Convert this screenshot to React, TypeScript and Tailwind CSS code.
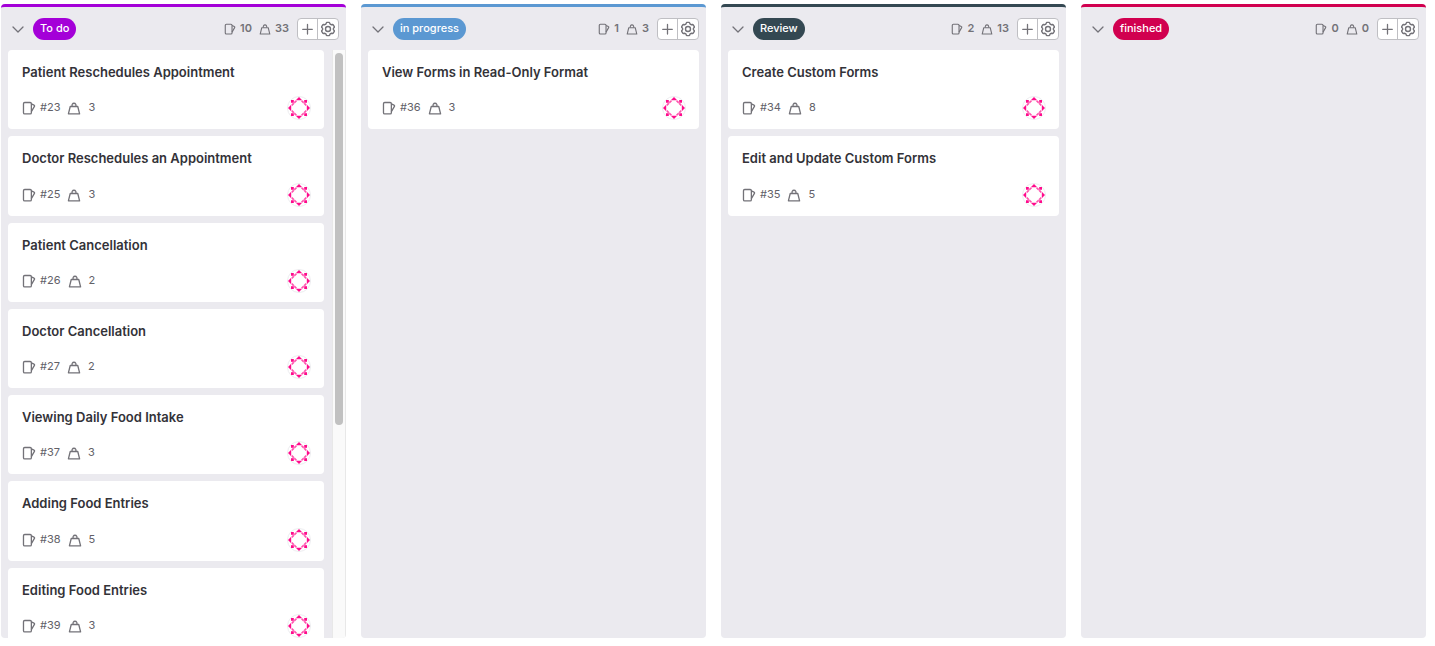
import React from "react";

type Card = { id: number; title: string; weight: number };
type Column = {
  name: string;
  line: string;
  pill: string;
  count: number;
  weight: number;
  cards: Card[];
  scroll?: boolean;
};

const columns: Column[] = [
  {
    name: "To do",
    line: "border-[#a400d8]",
    pill: "bg-[#a400d8]",
    count: 10,
    weight: 33,
    scroll: true,
    cards: [
      { id: 23, title: "Patient Reschedules Appointment", weight: 3 },
      { id: 25, title: "Doctor Reschedules an Appointment", weight: 3 },
      { id: 26, title: "Patient Cancellation", weight: 2 },
      { id: 27, title: "Doctor Cancellation", weight: 2 },
      { id: 37, title: "Viewing Daily Food Intake", weight: 3 },
      { id: 38, title: "Adding Food Entries", weight: 5 },
      { id: 39, title: "Editing Food Entries", weight: 3 },
    ],
  },
  {
    name: "in progress",
    line: "border-[#5b98d2]",
    pill: "bg-[#5b98d2]",
    count: 1,
    weight: 3,
    cards: [{ id: 36, title: "View Forms in Read-Only Format", weight: 3 }],
  },
  {
    name: "Review",
    line: "border-[#344852]",
    pill: "bg-[#344852]",
    count: 2,
    weight: 13,
    cards: [
      { id: 34, title: "Create Custom Forms", weight: 8 },
      { id: 35, title: "Edit and Update Custom Forms", weight: 5 },
    ],
  },
  {
    name: "finished",
    line: "border-[#d1004f]",
    pill: "bg-[#d1004f]",
    count: 0,
    weight: 0,
    cards: [],
  },
];

function IssueIcon({ className }: { className: string }) {
  return (
    <svg viewBox="0 0 16 16" className={className} fill="none" stroke="currentColor" strokeWidth="1.5" aria-hidden="true">
      <rect x="1.7" y="1.7" width="9" height="13" rx="1.4" />
      <path d="M10.7 3.2l3 1.5a1 1 0 0 1 .5 1.5l-3.5 6" strokeLinejoin="round" />
    </svg>
  );
}

function WeightIcon({ className }: { className: string }) {
  return (
    <svg viewBox="0 0 16 16" className={className} fill="none" stroke="currentColor" strokeWidth="1.5" aria-hidden="true">
      <path d="M3.7 6.3h8.6l2.1 8.4H1.6z" strokeLinejoin="round" />
      <path d="M6 6a2.3 2.3 0 1 1 4 0" />
    </svg>
  );
}

function ChevronIcon() {
  return (
    <svg viewBox="0 0 16 16" className="size-4" fill="none" stroke="currentColor" strokeWidth="1.3" strokeLinecap="round" strokeLinejoin="round" aria-hidden="true">
      <path d="M3 6l5 5 5-5" />
    </svg>
  );
}

function PlusIcon() {
  return (
    <svg viewBox="0 0 14 14" className="size-3.5" fill="none" stroke="currentColor" strokeWidth="1.3" strokeLinecap="round" aria-hidden="true">
      <path d="M6.5 2.5v9.5M1.7 7.3h9.6" />
    </svg>
  );
}

function GearIcon() {
  return (
    <svg viewBox="0 0 16 16" className="size-4" fill="none" stroke="currentColor" strokeWidth="1.4" strokeLinejoin="round" aria-hidden="true">
      <path d="M6.9 1.4h2.2a.6.6 0 0 1 .5.4l.5 1.3 1.1.6 1.4-.2a.6.6 0 0 1 .6.3l1.1 1.9a.6.6 0 0 1 0 .6L13.4 7.4v1.2l.9 1.1a.6.6 0 0 1 0 .6l-1.1 1.9a.6.6 0 0 1-.6.3l-1.4-.2-1.1.6-.5 1.3a.6.6 0 0 1-.5.4H6.9a.6.6 0 0 1-.5-.4l-.5-1.3-1.1-.6-1.4.2a.6.6 0 0 1-.6-.3l-1.1-1.9a.6.6 0 0 1 0-.6l.9-1.1V7.4l-.9-1.1a.6.6 0 0 1 0-.6l1.1-1.9a.6.6 0 0 1 .6-.3l1.4.2 1.1-.6.5-1.3a.6.6 0 0 1 .5-.4z" />
      <circle cx="8" cy="8" r="2.5" />
    </svg>
  );
}

function Avatar() {
  return (
    <svg viewBox="0 0 24 24" className="size-6" role="img" aria-label="Assignee">
      <circle cx="12" cy="12" r="11.5" fill="#fff" stroke="#ececef" />
      {[0, 90, 180, 270].map((angle) => (
        <g key={angle} transform={`rotate(${angle} 12 12)`} fill="#ff0a8c">
          <path d="M12 1l3.2 3.2H8.8z" />
          <path d="M4 4h2.8v2.8H4z" />
          <path d="M6.8 6l2-1.7 1.2 1-2.2 2.2zM6 6.8L4.3 8.8l1 1.2 2.2-2.2z" opacity=".7" />
        </g>
      ))}
    </svg>
  );
}

function BoardCard({ card }: { card: Card }) {
  return (
    <li className="shrink-0 rounded bg-white pt-3.5 pr-[13px] pb-[9px] pl-3.5">
      <h3 className="text-[13px] leading-tight font-semibold text-[#333238]">{card.title}</h3>
      <div className="mt-4 flex items-center justify-between">
        <div className="flex items-center text-[11px] leading-4 text-[#626168]">
          <IssueIcon className="size-3.5 text-[#737278]" />
          <span className="ml-1 pb-0.5">#{card.id}</span>
          <WeightIcon className="ml-[7px] size-3.5 text-[#737278]" />
          <span className="ml-[7px] pb-0.5">{card.weight}</span>
        </div>
        <Avatar />
      </div>
    </li>
  );
}

function BoardColumn({ column }: { column: Column }) {
  return (
    <section className={`flex min-h-0 min-w-0 flex-col overflow-hidden rounded border-t-[3px] bg-[#ebeaef] ${column.line}`}>
      <header className="flex h-[43px] shrink-0 items-center pr-[7px] pl-[9px] text-[#737278]">
        <button type="button" aria-label={`Collapse ${column.name}`}>
          <ChevronIcon />
        </button>
        <h2 className={`ml-[7px] rounded-full px-[7px] pb-0.5 text-[11px] leading-5 font-medium text-white ${column.pill}`}>
          {column.name}
        </h2>
        <div className="ml-auto flex items-center text-[11px] leading-4 font-semibold">
          <IssueIcon className="size-3" />
          <span className="ml-1 pb-0.5">{column.count}</span>
          <WeightIcon className="ml-[7px] size-3" />
          <span className="ml-1 pb-0.5">{column.weight}</span>
        </div>
        <div className="ml-2 flex h-[22px] divide-x divide-[#bfbfc3] overflow-hidden rounded border border-[#bfbfc3] bg-white">
          <button type="button" aria-label="Create new issue" className="flex w-5 items-center justify-center">
            <PlusIcon />
          </button>
          <button type="button" aria-label="Edit list settings" className="flex w-5 items-center justify-center">
            <GearIcon />
          </button>
        </div>
      </header>
      <div className="flex min-h-0 flex-1">
        <ul className={`flex min-w-0 flex-1 flex-col gap-[7px] overflow-hidden pl-[7px] ${column.scroll ? "pr-2" : "pr-[7px]"}`}>
          {column.cards.map((card) => (
            <BoardCard key={card.id} card={card} />
          ))}
        </ul>
        {column.scroll && (
          <div className="w-3.5 shrink-0 border-x border-[#e8e8e8] bg-[#fafafa] px-0.5 py-[3px]" aria-hidden="true">
            <div className="mx-auto h-[64%] w-2 rounded-full bg-[#c1c1c1]" />
          </div>
        )}
      </div>
    </section>
  );
}

export default function App() {
  return (
    <main className="grid h-screen grid-cols-4 gap-[15px] bg-white pt-1 pr-[9px] pb-2 pl-px font-[Inter,sans-serif]">
      {columns.map((column) => (
        <BoardColumn key={column.name} column={column} />
      ))}
    </main>
  );
}
